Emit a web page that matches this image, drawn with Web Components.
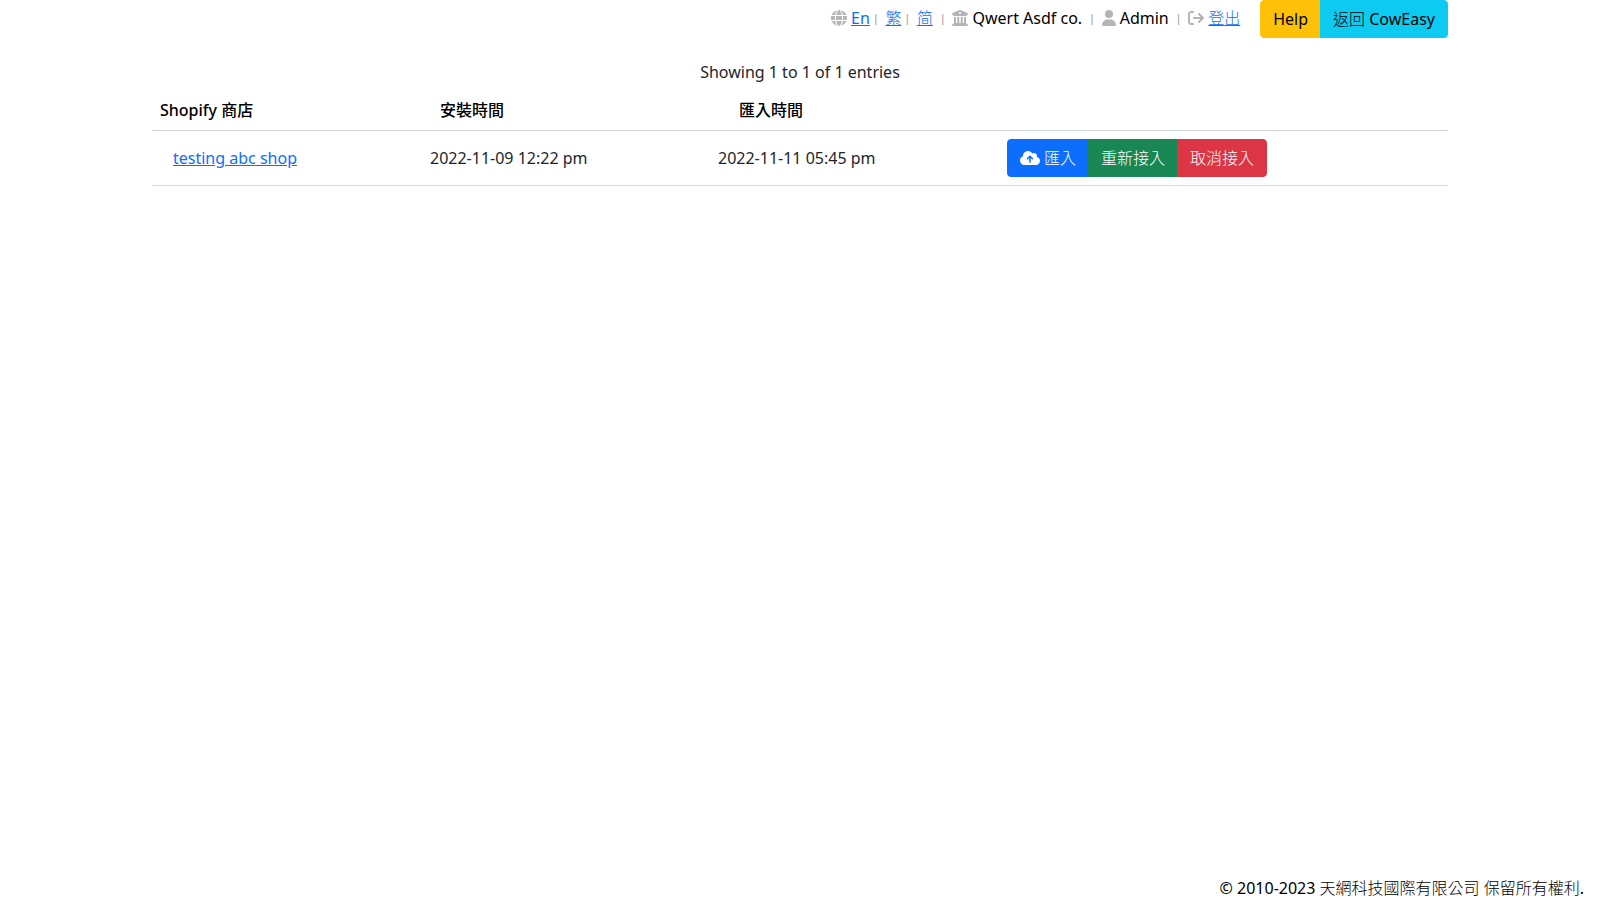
<!DOCTYPE html>
<html lang="zh-Hant">
<head>
<meta charset="utf-8">
<meta name="viewport" content="width=device-width, initial-scale=1">
<title>CowEasy</title>
<style>
body {
  margin: 0;
  background: #fff;
  color: #212529;
  font-family: "Noto Sans", "Noto Sans CJK TC Light", "Noto Sans CJK TC DemiLight", "Noto Sans CJK TC", sans-serif;
  font-size: 16px;
  line-height: 24px;
}
</style>
</head>
<body>
<cow-app></cow-app>
<script>
const ICONS = {
  globe: [512, "M352 256c0 22.2-1.2 43.6-3.3 64H163.3c-2.2-20.4-3.3-41.8-3.3-64s1.2-43.6 3.3-64H348.7c2.2 20.4 3.3 41.8 3.3 64zm28.8-64H503.9c5.3 20.5 8.1 41.9 8.1 64s-2.8 43.5-8.1 64H380.8c2.1-20.6 3.2-42 3.2-64s-1.1-43.4-3.2-64zm112.6-32H376.7c-10-63.9-29.8-117.4-55.3-151.6c78.3 20.7 142 77.5 171.9 151.6zm-149.1 0H167.7c6.1-36.4 15.5-68.6 27-94.7c10.5-23.6 22.2-40.7 33.5-51.5C239.4 3.2 248.7 0 256 0s16.6 3.2 27.8 13.8c11.3 10.8 23 27.9 33.5 51.5c11.6 26 20.9 58.2 27 94.7zm-209 0H18.6C48.6 85.9 112.2 29.1 190.6 8.4C165.1 42.6 145.3 96.1 135.3 160zM8.1 192H131.2c-2.1 20.6-3.2 42-3.2 64s1.1 43.4 3.2 64H8.1C2.8 299.5 0 278.1 0 256s2.8-43.5 8.1-64zM194.7 446.6c-11.6-26-20.9-58.2-27-94.6H344.3c-6.1 36.4-15.5 68.6-27 94.6c-10.5 23.6-22.2 40.7-33.5 51.5C272.6 508.8 263.3 512 256 512s-16.6-3.2-27.8-13.8c-11.3-10.8-23-27.9-33.5-51.5zM135.3 352c10 63.9 29.8 117.4 55.3 151.6C112.2 482.9 48.6 426.1 18.6 352H135.3zm358.1 0c-30 74.1-93.6 130.9-171.9 151.6c25.5-34.2 45.2-87.7 55.3-151.6H493.4z"],
  bank: [512, "M243.4 2.6l-224 96c-14 6-21.8 21-18.7 35.8S16.8 160 32 160v8c0 13.3 10.7 24 24 24H456c13.3 0 24-10.7 24-24v-8c15.2 0 28.3-10.7 31.3-25.6s-4.8-29.9-18.7-35.8l-224-96c-8-3.4-17.2-3.4-25.2 0zM128 224H64V420.3c-.6 .3-1.2 .7-1.8 1.1l-48 32c-11.7 7.8-17 22.4-12.9 35.9S17.9 512 32 512H480c14.1 0 26.5-9.2 30.6-22.7s-1.1-28.1-12.9-35.9l-48-32c-.6-.4-1.2-.7-1.8-1.1V224H384V416H344V224H280V416H232V224H168V416H128V224zM256 64a32 32 0 1 1 0 64 32 32 0 1 1 0-64z"],
  user: [448, "M224 256A128 128 0 1 0 224 0a128 128 0 1 0 0 256zm-45.7 48C79.8 304 0 383.8 0 482.3C0 498.7 13.3 512 29.7 512H418.3c16.4 0 29.7-13.3 29.7-29.7C448 383.8 368.2 304 269.7 304H178.3z"],
  exit: [512, "M502.6 278.6l-128 128c-12.5 12.5-32.8 12.5-45.3 0c-12.5-12.5-12.5-32.8 0-45.3L402.8 288H192C174.3 288 160 273.7 160 256s14.3-32 32-32h210.8l-73.4-73.4c-12.5-12.5-12.5-32.8 0-45.3s32.8-12.5 45.3 0l128 128C515.1 245.9 515.1 266.1 502.6 278.6zM160 96c17.7 0 32-14.3 32-32s-14.3-32-32-32H96C43 32 0 75 0 128v256c0 53 43 96 96 96h64c17.7 0 32-14.3 32-32s-14.3-32-32-32H96c-17.7 0-32-14.3-32-32V128c0-17.7 14.3-32 32-32h64z"],
  cloud: [640, "M144 480C64.5 480 0 415.5 0 336c0-62.8 40.2-116.2 96.2-135.9c-.1-2.7-.2-5.4-.2-8.1c0-88.4 71.6-160 160-160c59.3 0 111 32.2 138.7 80.2C409.9 102 428.3 96 448 96c53 0 96 43 96 96c0 12.2-2.3 23.8-6.4 34.6C596 238.4 640 290.1 640 352c0 70.7-57.3 128-128 128H144zm79-217c-9.4 9.4-9.4 24.6 0 33.9s24.6 9.4 33.9 0l39-39V392c0 13.3 10.7 24 24 24s24-10.7 24-24V257.9l39 39c9.4 9.4 24.6 9.4 33.9 0s9.4-24.6 0-33.9l-80-80c-9.4-9.4-24.6-9.4-33.9 0l-80 80z"]
};

const LINKS = `a { color: #0d6efd; text-decoration: underline; }`;

function define(name, html) {
  const template = document.createElement("template");
  template.innerHTML = html;
  customElements.define(name, class extends HTMLElement {
    constructor() {
      super();
      this.attachShadow({ mode: "open" }).append(template.content.cloneNode(true));
    }
  });
}

class CowIcon extends HTMLElement {
  connectedCallback() {
    const [width, path] = ICONS[this.getAttribute("name")];
    const root = this.shadowRoot || this.attachShadow({ mode: "open" });
    root.innerHTML = `
      <style>:host { display: block; flex: none; } svg { display: block; }</style>
      <svg width="${width / 32}" height="16" viewBox="0 0 ${width} 512" fill="currentColor" aria-hidden="true"><path d="${path}"/></svg>`;
  }
}
customElements.define("cow-icon", CowIcon);

define("cow-button", `
  <style>
    :host { display: block; --bg: #0d6efd; --fg: #fff; }
    :host([tone=warning]) { --bg: #ffc107; --fg: #000; }
    :host([tone=info]) { --bg: #0dcaf0; --fg: #000; }
    :host([tone=success]) { --bg: #198754; }
    :host([tone=danger]) { --bg: #dc3545; }
    :host(:not(:first-child)) { margin-left: -1px; }
    button {
      display: flex; align-items: center; gap: 4px;
      margin: 0; padding: 6px 12px; border: 1px solid var(--bg);
      background: var(--bg); color: var(--fg);
      font: inherit; white-space: nowrap; cursor: pointer;
    }
    :host(:first-child) button { border-radius: 4px 0 0 4px; }
    :host(:last-child) button { border-radius: 0 4px 4px 0; }
  </style>
  <button type="button"><slot></slot></button>`);

define("cow-button-group", `
  <style>:host { display: flex; }</style>
  <slot></slot>`);

define("cow-nav", `
  <style>
    :host { display: flex; justify-content: flex-end; align-items: flex-start; gap: 20px; }
    nav { display: flex; align-items: center; padding-top: 6px; white-space: nowrap; color: #000; }
    cow-icon { color: #b5b5b5; margin-right: 4px; }
    .sep { color: #888; font-size: 10px; padding: 0 7px; }
    .sep.tight { padding-left: 3px; }
    ${LINKS}
  </style>
  <nav>
    <cow-icon name="globe"></cow-icon><a href="#en">En</a>
    <span class="sep tight">|</span><a href="#tc">繁</a>
    <span class="sep tight">|</span><a href="#sc" lang="zh-Hans">简</a>
    <span class="sep">|</span><cow-icon name="bank"></cow-icon><span>Qwert Asdf co.</span>
    <span class="sep">|</span><cow-icon name="user"></cow-icon><span>Admin</span>
    <span class="sep">|</span><cow-icon name="exit"></cow-icon><a href="#logout">登出</a>
  </nav>
  <cow-button-group>
    <cow-button tone="warning">Help</cow-button>
    <cow-button tone="info">返回 CowEasy</cow-button>
  </cow-button-group>`);

define("cow-shops", `
  <style>
    :host { display: block; }
    p { margin: 0 0 6px; text-align: center; }
    table { width: 100%; border-collapse: separate; border-spacing: 0; table-layout: fixed; }
    th, td { box-sizing: border-box; padding: 8px; text-align: left; vertical-align: middle; white-space: nowrap; }
    th {
      border-bottom: 1px solid #ced6dc; color: #000; font-weight: 500;
      font-family: "Noto Sans", "Noto Sans CJK TC Medium", "Noto Sans CJK TC", sans-serif;
    }
    td { border-bottom: 1px solid #d6d8da; }
    .shop { width: 270px; }
    .installed { width: 288px; padding-left: 18px; }
    .imported { width: 289px; padding-left: 29px; }
    td a { display: inline-block; padding: 0 13px; }
    ${LINKS}
  </style>
  <p>Showing 1 to 1 of 1 entries</p>
  <table>
    <thead><tr>
      <th class="shop">Shopify 商店</th>
      <th class="installed">安裝時間</th>
      <th class="imported">匯入時間</th>
      <th></th>
    </tr></thead>
    <tbody><tr>
      <td><a href="#shop">testing abc shop</a></td>
      <td>2022-11-09 12:22 pm</td>
      <td>2022-11-11 05:45 pm</td>
      <td><cow-button-group>
        <cow-button><cow-icon name="cloud"></cow-icon>匯入</cow-button>
        <cow-button tone="success">重新接入</cow-button>
        <cow-button tone="danger">取消接入</cow-button>
      </cow-button-group></td>
    </tr></tbody>
  </table>`);

define("cow-footer", `
  <style>
    :host { display: block; padding: 0 16px; text-align: right; color: #000; }
  </style>
  <footer>© 2010-2023 天網科技國際有限公司 保留所有權利.</footer>`);

define("cow-app", `
  <style>
    :host { display: flex; flex-direction: column; min-height: 100vh; }
    main { flex: 1; box-sizing: border-box; width: 100%; max-width: 1320px; margin: 0 auto; padding: 0 12px; }
    cow-shops { margin-top: 22px; }
  </style>
  <main>
    <cow-nav></cow-nav>
    <cow-shops></cow-shops>
  </main>
  <cow-footer></cow-footer>`);
</script>
</body>
</html>
